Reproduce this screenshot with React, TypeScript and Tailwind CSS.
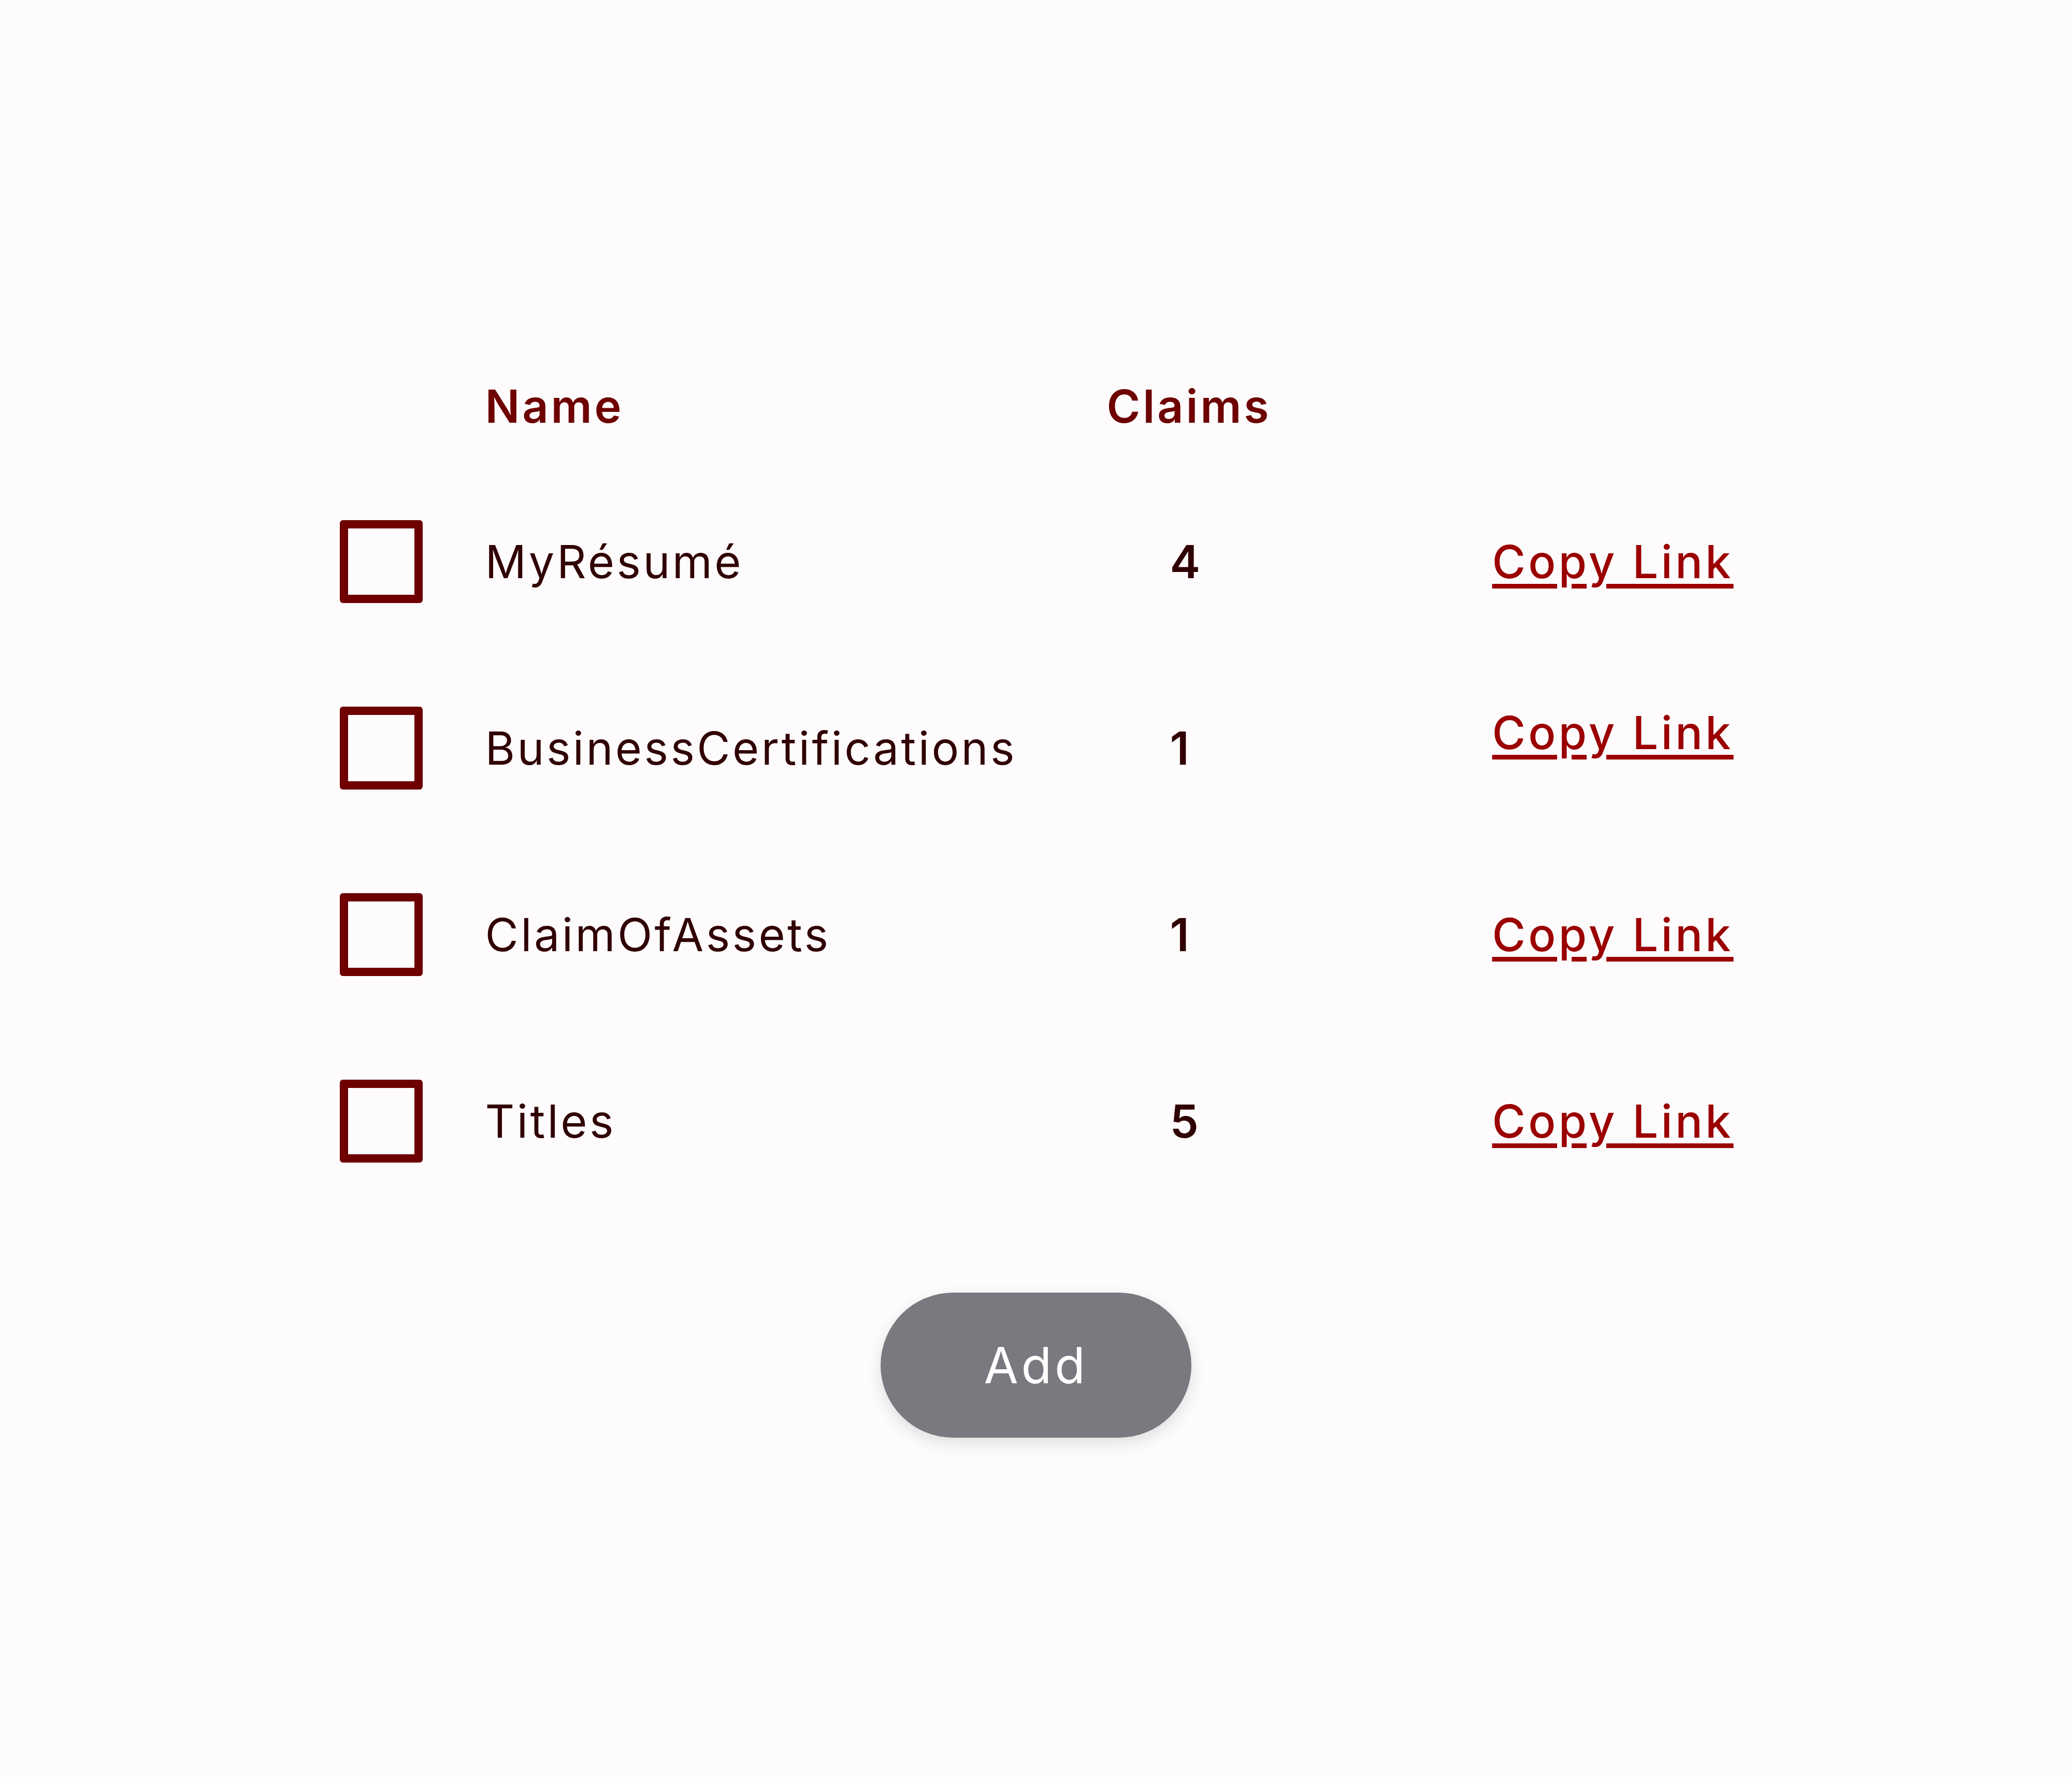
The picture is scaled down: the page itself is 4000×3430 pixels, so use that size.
export default function App() {
  const rows = [
    { name: "MyRésumé", claims: 4, raised: false },
    { name: "BusinessCertifications", claims: 1, raised: true },
    { name: "ClaimOfAssets", claims: 1, raised: false },
    { name: "Titles", claims: 5, raised: false },
  ];
  return (
    <div className="min-h-screen bg-[#fdfbfc] flex flex-col items-center pt-[664px] font-['Inter',sans-serif]">
      <div className="flex flex-col w-[2689px]">
        <div className="flex items-center h-[240px] text-[88px] leading-none font-semibold text-[#6e0000] tracking-[0.055em]">
          <div className="w-[281px] shrink-0" />
          <div className="w-[1200px] shrink-0">Name</div>
          <div className="w-[312px] shrink-0">Claims</div>
        </div>
        {rows.map((r) => (
          <div key={r.name} className="flex items-center h-[360px] text-[88px] leading-none">
            <div className="w-[281px] shrink-0 flex items-center">
              <div className="w-[160px] h-[160px] border-[16px] border-[#6e0000] rounded-[6px]" />
            </div>
            <div className="w-[1200px] shrink-0 text-[#300003] tracking-[0.05em]">{r.name}</div>
            <div className="w-[312px] shrink-0 pl-[122px] text-[#300003] font-semibold">{r.claims}</div>
            <div className="w-[432px] shrink-0" />
            <a
              href="#"
              className={
                r.raised
                  ? "shrink-0 whitespace-nowrap mb-[60px] text-[#9b0000] font-medium tracking-[0.06em] underline decoration-[length:9px] underline-offset-[11px]"
                  : "shrink-0 whitespace-nowrap text-[#9b0000] font-medium tracking-[0.06em] underline decoration-[length:9px] underline-offset-[11px]"
              }
            >
              Copy Link
            </a>
          </div>
        ))}
      </div>
      <button className="mt-[151px] w-[600px] h-[280px] rounded-full bg-[#797a7f] text-white text-[96px] leading-none tracking-[0.06em] shadow-[0_10px_30px_rgba(0,0,0,0.12)]">
        Add
      </button>
    </div>
  );
}
